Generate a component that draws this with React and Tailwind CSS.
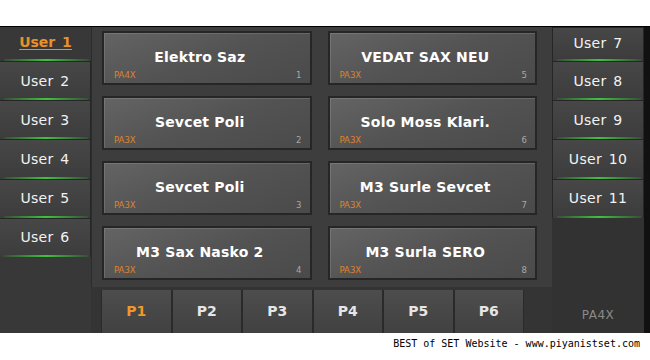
import React from "react";

const cards = [
  { name: "Elektro Saz", tag: "PA4X", n: 1 },
  { name: "VEDAT SAX NEU", tag: "PA3X", n: 5 },
  { name: "Sevcet Poli", tag: "PA3X", n: 2 },
  { name: "Solo Moss Klari.", tag: "PA3X", n: 6 },
  { name: "Sevcet Poli", tag: "PA3X", n: 3 },
  { name: "M3 Surle Sevcet", tag: "PA3X", n: 7 },
  { name: "M3 Sax Nasko 2", tag: "PA3X", n: 4 },
  { name: "M3 Surla SERO", tag: "PA3X", n: 8 },
];

function Green() {
  return (
    <div className="absolute left-[4px] right-[2px] bottom-0 h-[2px] bg-[linear-gradient(90deg,rgba(40,160,40,0.2),#3fc23f_50%,rgba(40,160,40,0.2))]" />
  );
}

function UserRow({ label, active, side, first }) {
  return (
    <div
      className={
        "relative flex items-center justify-center " +
        (first ? "h-[34px] pb-[3px] " : "h-[39.2px] ") +
        (active
          ? ""
          : side === "left"
          ? "bg-[linear-gradient(180deg,#474747,#3c3c3c)] border-t border-r border-[#262626]"
          : "bg-[linear-gradient(180deg,#474747,#3c3c3c)] border-t border-l border-r border-[#262626]")
      }
    >
      <span
        className={
          active
            ? "text-[14px] font-bold text-[#e8902a] underline decoration-1 underline-offset-2"
            : "text-[14px] text-[#f2f2f2] tracking-[0.3px]"
        }
        style={{ wordSpacing: "2px" }}
      >
        {label}
      </span>
      <Green />
    </div>
  );
}

export default function App() {
  return (
    <div
      className="w-[650px] h-[360px] bg-white flex flex-col"
      style={{ fontFamily: '"DejaVu Sans", Verdana, sans-serif' }}
    >
      <div className="h-[26px]" />
      <div className="h-[307px] flex bg-[#343434] border-t border-black">
        {/* left column */}
        <div className="w-[91px] flex flex-col bg-[#383838]">
          <UserRow label="User 1" active side="left" first />
          <UserRow label="User 2" side="left" />
          <UserRow label="User 3" side="left" />
          <UserRow label="User 4" side="left" />
          <UserRow label="User 5" side="left" />
          <UserRow label="User 6" side="left" />
        </div>
        {/* center */}
        <div className="w-[461px] flex flex-col">
          <div className="h-[260px] bg-[#3d3d3d] border-l border-[#2c2c2c] pl-[10px] pr-[15px] pt-[4px] grid grid-cols-2 gap-x-[16px] gap-y-[11px] content-start">
            {cards.map((c, i) => (
              <div
                key={i}
                className="relative h-[54px] border-2 border-[#262626] bg-[linear-gradient(160deg,#646464,#535353_50%,#4a4a4a)] shadow-[inset_1px_1px_0_rgba(255,255,255,0.12)]"
              >
                <div className="absolute left-0 right-[14px] top-[15px] text-center text-[14px] font-bold text-white leading-[18px] tracking-[0.2px]">
                  {c.name}
                </div>
                <div className="absolute left-[10px] top-[37px] text-[8.5px] text-[#e0822a] leading-[10px]">
                  {c.tag}
                </div>
                <div className="absolute right-[8px] top-[37px] text-[8.5px] text-[#a8a8a8] leading-[10px]">
                  {c.n}
                </div>
              </div>
            ))}
          </div>
          <div className="mt-[3px] ml-[10px] flex h-[43px]">
            {["P1", "P2", "P3", "P4", "P5", "P6"].map((p, i) => (
              <div
                key={p}
                className="w-[70.5px] flex items-center justify-center bg-[linear-gradient(180deg,#4d4d4d,#414141)] border-l border-r border-[#2a2a2a]"
              >
                <span
                  className={
                    "text-[14px] font-bold " +
                    (i === 0 ? "text-[#f0962a]" : "text-[#e6e6e6]")
                  }
                >
                  {p}
                </span>
              </div>
            ))}
          </div>
        </div>
        {/* right column */}
        <div className="w-[92px] flex flex-col bg-[#323232]">
          <UserRow label="User 7" side="right" first />
          <UserRow label="User 8" side="right" />
          <UserRow label="User 9" side="right" />
          <UserRow label="User 10" side="right" />
          <UserRow label="User 11" side="right" />
          <div className="flex-1 flex items-end justify-center pb-[9px]">
            <span className="text-[12px] text-[#8a8a8a] tracking-[0.5px]">PA4X</span>
          </div>
        </div>
        <div className="flex-1 bg-[#111111]" />
      </div>
      <div className="flex-1 flex items-start justify-end pr-[10px] pt-[6px]">
        <span
          className="text-[10px] text-black leading-none"
          style={{ fontFamily: '"DejaVu Sans Mono", monospace' }}
        >
          BEST of SET Website - www.piyanistset.com
        </span>
      </div>
    </div>
  );
}
